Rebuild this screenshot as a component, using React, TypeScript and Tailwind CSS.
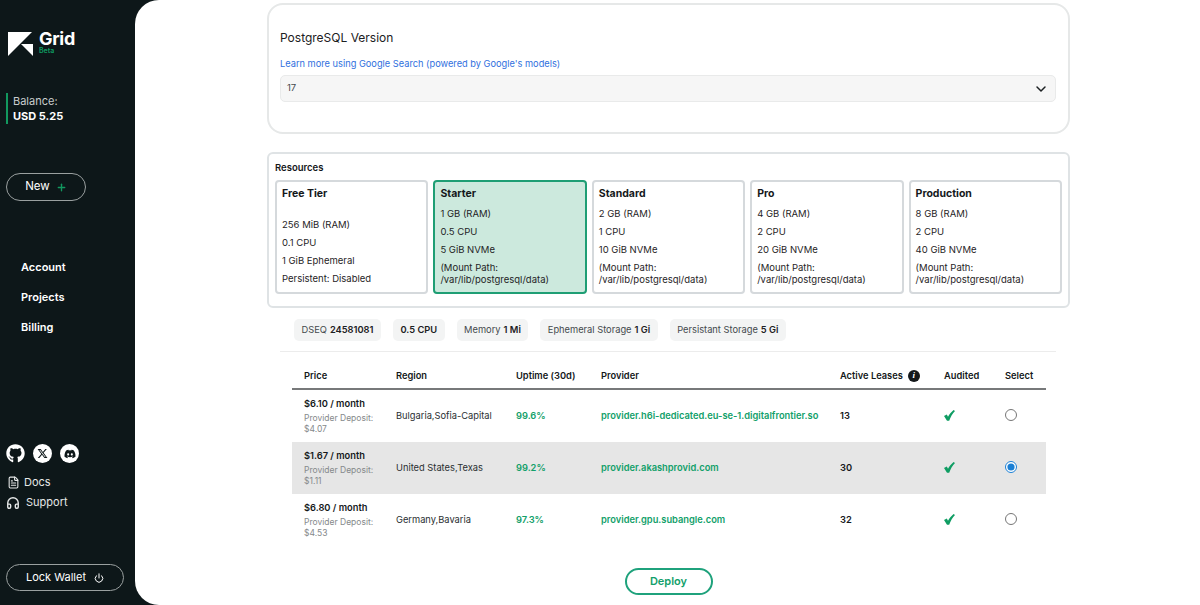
import React from 'react';
import { ChevronDown, FileText, Headphones, Plus, Power } from 'lucide-react';
import { FaDiscord, FaGithub, FaXTwitter } from 'react-icons/fa6';

const plans = [
  { name: 'Free Tier', lines: ['256 MiB (RAM)', '0.1 CPU', '1 GiB Ephemeral', 'Persistent: Disabled'], free: true },
  { name: 'Starter', lines: ['1 GB (RAM)', '0.5 CPU', '5 GiB NVMe'], selected: true },
  { name: 'Standard', lines: ['2 GB (RAM)', '1 CPU', '10 GiB NVMe'] },
  { name: 'Pro', lines: ['4 GB (RAM)', '2 CPU', '20 GiB NVMe'] },
  { name: 'Production', lines: ['8 GB (RAM)', '2 CPU', '40 GiB NVMe'] }
];

const providers = [
  { price: '$6.10 / month', deposit: '$4.07', region: 'Bulgaria,Sofia-Capital', uptime: '99.6%', host: 'provider.h6i-dedicated.eu-se-1.digitalfrontier.so', leases: '13' },
  { price: '$1.67 / month', deposit: '$1.11', region: 'United States,Texas', uptime: '99.2%', host: 'provider.akashprovid.com', leases: '30', selected: true },
  { price: '$6.80 / month', deposit: '$4.53', region: 'Germany,Bavaria', uptime: '97.3%', host: 'provider.gpu.subangle.com', leases: '32' }
];

const rowGrid = 'grid grid-cols-[92px_120px_85px_239px_104px_61px_41px] items-center pl-3';

function Sidebar() {
  return (
    <aside className="flex h-[605px] w-[135px] shrink-0 flex-col bg-[#0d1719] pl-1.5 text-white">
      {/* Logo */}
      <div className="ml-0.5 mt-8 flex h-6 items-start gap-1.5">
        <svg width="25" height="24" viewBox="0 0 25 24" fill="white">
          <path d="M0 0H24L12 12L0 24Z" />
          <path d="M13 12H25V24Z" />
        </svg>
        <div className="-mt-0.5">
          <div className="text-[18px] font-bold leading-[17px] tracking-[-0.3px]">Grid</div>
          <div className="text-[7px] font-semibold leading-[7px] text-[#0f9d63]">Beta</div>
        </div>
      </div>

      {/* Balance */}
      <div className="mt-[37px] h-[31px] border-l-2 border-[#12985f] pl-[5px]">
        <div className="text-[11px] leading-[16px] text-[#c9cdcd]">Balance:</div>
        <div className="text-[11px] font-bold leading-[15px]">USD 5.25</div>
      </div>

      <button className="mt-[49px] flex h-[28px] w-[80px] items-center justify-center gap-1.5 rounded-full border border-[#9aa0a0] text-[11.5px]">
        New <Plus size={11} strokeWidth={3} className="text-[#12985f]" />
      </button>

      <nav className="ml-[15px] mt-[59px] flex flex-col gap-[15px] text-[11px] font-semibold leading-[15px]">
        <div>Account</div>
        <div>Projects</div>
        <div>Billing</div>
      </nav>

      {/* Socials */}
      <div className="mt-[109px] flex items-center gap-[8px]">
        <FaGithub size={19} />
        <div className="flex h-[19px] w-[19px] items-center justify-center rounded-full bg-white">
          <FaXTwitter size={11} className="text-[#0d1719]" />
        </div>
        <div className="flex h-[19px] w-[19px] items-center justify-center rounded-full bg-white">
          <FaDiscord size={12} className="text-[#0d1719]" />
        </div>
      </div>

      <div className="mt-[11px] flex h-[17px] items-center gap-[4px] pl-px text-[11px] text-[#e6e8e8]">
        <FileText size={13} /> Docs
      </div>
      <div className="mt-[3px] flex h-[17px] items-center gap-[6px] text-[11px] text-[#e6e8e8]">
        <Headphones size={14} strokeWidth={2.4} /> Support
      </div>

      <button className="mt-[53px] flex h-[27px] w-[118px] items-center justify-center gap-2 rounded-full border border-[#9aa0a0] text-[11px]">
        Lock Wallet <Power size={10} strokeWidth={2.4} />
      </button>
    </aside>
  );
}

function PlanCard({ plan }: { plan: (typeof plans)[number] }) {
  return (
    <div
      className={`h-[114px] rounded-[4px] border-2 px-[5px] pt-[4px] text-[9.5px] text-[#1f2426] ${
        plan.selected ? 'border-[#1e9e74] bg-[#cce9dd]' : 'border-[#d5d9dc] bg-white'
      }`}
    >
      <div className="text-[10.5px] font-bold leading-[16px] text-[#14181a]">{plan.name}</div>
      <div className={`flex flex-col gap-[7px] leading-[11px] ${plan.free ? 'mt-[17px]' : 'mt-[6px]'}`}>
        {plan.lines.map((line) => (
          <div key={line}>{line}</div>
        ))}
        {!plan.free && (
          <div className="leading-[12px]">
            (Mount Path:
            <br />
            /var/lib/postgresql/data)
          </div>
        )}
      </div>
    </div>
  );
}

function Chip({ label, value }: { label?: string; value: string }) {
  return (
    <div className="flex h-[22px] items-center gap-[3px] rounded-[5px] bg-[#f3f4f4] px-[7.5px] text-[9.3px] text-[#444a4d]">
      {label && <span>{label}</span>}
      <span className="font-semibold text-[#1c2022]">{value}</span>
    </div>
  );
}

export default function App() {
  return (
    <div className="flex h-[605px] w-[1200px] overflow-hidden bg-[#0d1719] font-['Inter',sans-serif]">
      <Sidebar />
      <main className="min-w-0 flex-1 rounded-l-[24px] bg-white pl-[132px] pr-[130px] pt-[3px]">
        {/* Version */}
        <section className="h-[131px] rounded-[16px] border-2 border-[#e6e8e8] pl-[11px] pr-[12px] pt-[25px]">
          <div className="text-[12px] leading-[16px] text-[#1c2022]">PostgreSQL Version</div>
          <div className="mt-[12px] text-[9.25px] leading-[12px] text-[#2f6fde]">
            Learn more using Google Search (powered by Google's models)
          </div>
          <div className="mt-[5px] flex h-[27px] items-center justify-between rounded-[5px] border border-[#e9eaea] bg-[#f6f6f6] px-[6px] text-[9.5px] text-[#444a4d]">
            17
            <ChevronDown size={16} strokeWidth={2.2} className="text-[#1c2022]" />
          </div>
        </section>

        {/* Resources */}
        <section className="mt-[18px] h-[156px] rounded-[6px] border-2 border-[#dfe3e5] px-[6px] pt-[8px]">
          <div className="text-[9.5px] font-semibold leading-[12px] text-[#14181a]">Resources</div>
          <div className="mt-[6px] grid grid-cols-5 gap-[5px]">
            {plans.map((plan) => (
              <PlanCard key={plan.name} plan={plan} />
            ))}
          </div>
        </section>

        {/* Deployment summary */}
        <div className="ml-[13px] mr-[14px]">
          <div className="flex h-[44px] items-center gap-[12px] border-b border-[#ececec] pl-[14px]">
            <Chip label="DSEQ" value="24581081" />
            <Chip value="0.5 CPU" />
            <Chip label="Memory" value="1 Mi" />
            <Chip label="Ephemeral Storage" value="1 Gi" />
            <Chip label="Persistant Storage" value="5 Gi" />
          </div>

          {/* Provider table */}
          <div className="ml-[12px] mr-[10px] text-[9.3px]">
            <div className={`${rowGrid} h-[38px] border-b-2 border-[#77797a] pt-[12px] font-semibold text-[#14181a]`}>
              <div>Price</div>
              <div>Region</div>
              <div>Uptime (30d)</div>
              <div>Provider</div>
              <div className="flex items-center gap-[5px]">
                Active Leases
                <span className="flex h-3 w-3 items-center justify-center rounded-full bg-[#14181a] font-['Liberation_Serif',serif] text-[9px] font-bold italic text-white">
                  i
                </span>
              </div>
              <div>Audited</div>
              <div>Select</div>
            </div>
            {providers.map((row) => (
              <div key={row.host} className={`${rowGrid} h-[52px] ${row.selected ? 'bg-[#e6e6e6]' : ''}`}>
                <div>
                  <div className="font-semibold leading-[13px] text-[#14181a]">{row.price}</div>
                  <div className="mt-[3px] text-[8.5px] leading-[11px] text-[#85898b]">
                    Provider Deposit:
                    <br />
                    {row.deposit}
                  </div>
                </div>
                <div className="text-[#2a2f31]">{row.region}</div>
                <div className="font-semibold text-[#12a06a]">{row.uptime}</div>
                <div className="whitespace-nowrap font-semibold text-[#12a06a]">{row.host}</div>
                <div className="font-semibold text-[#14181a]">{row.leases}</div>
                <div>
                  <svg width="11" height="11" viewBox="0 0 11 11" fill="#0f9d63" className="-translate-y-px">
                    <path d="M0 6L2.8 4.6L4 6.8C5.5 4 7.5 1.8 9.6 0L11 1C8.6 3.6 6.6 6.8 5.2 10.8L3 10.8Z" />
                  </svg>
                </div>
                <div>
                  <input
                    type="radio"
                    readOnly
                    checked={!!row.selected}
                    className="block h-[12px] w-[12px] -translate-y-px accent-[#1a7fd4]"
                  />
                </div>
              </div>
            ))}
          </div>
        </div>

        <div className="mt-[22px] flex justify-center">
          <button className="h-[27px] w-[88px] rounded-full border-2 border-[#1fa27c] text-[11px] font-semibold text-[#12a06a]">
            Deploy
          </button>
        </div>
      </main>
    </div>
  );
}
